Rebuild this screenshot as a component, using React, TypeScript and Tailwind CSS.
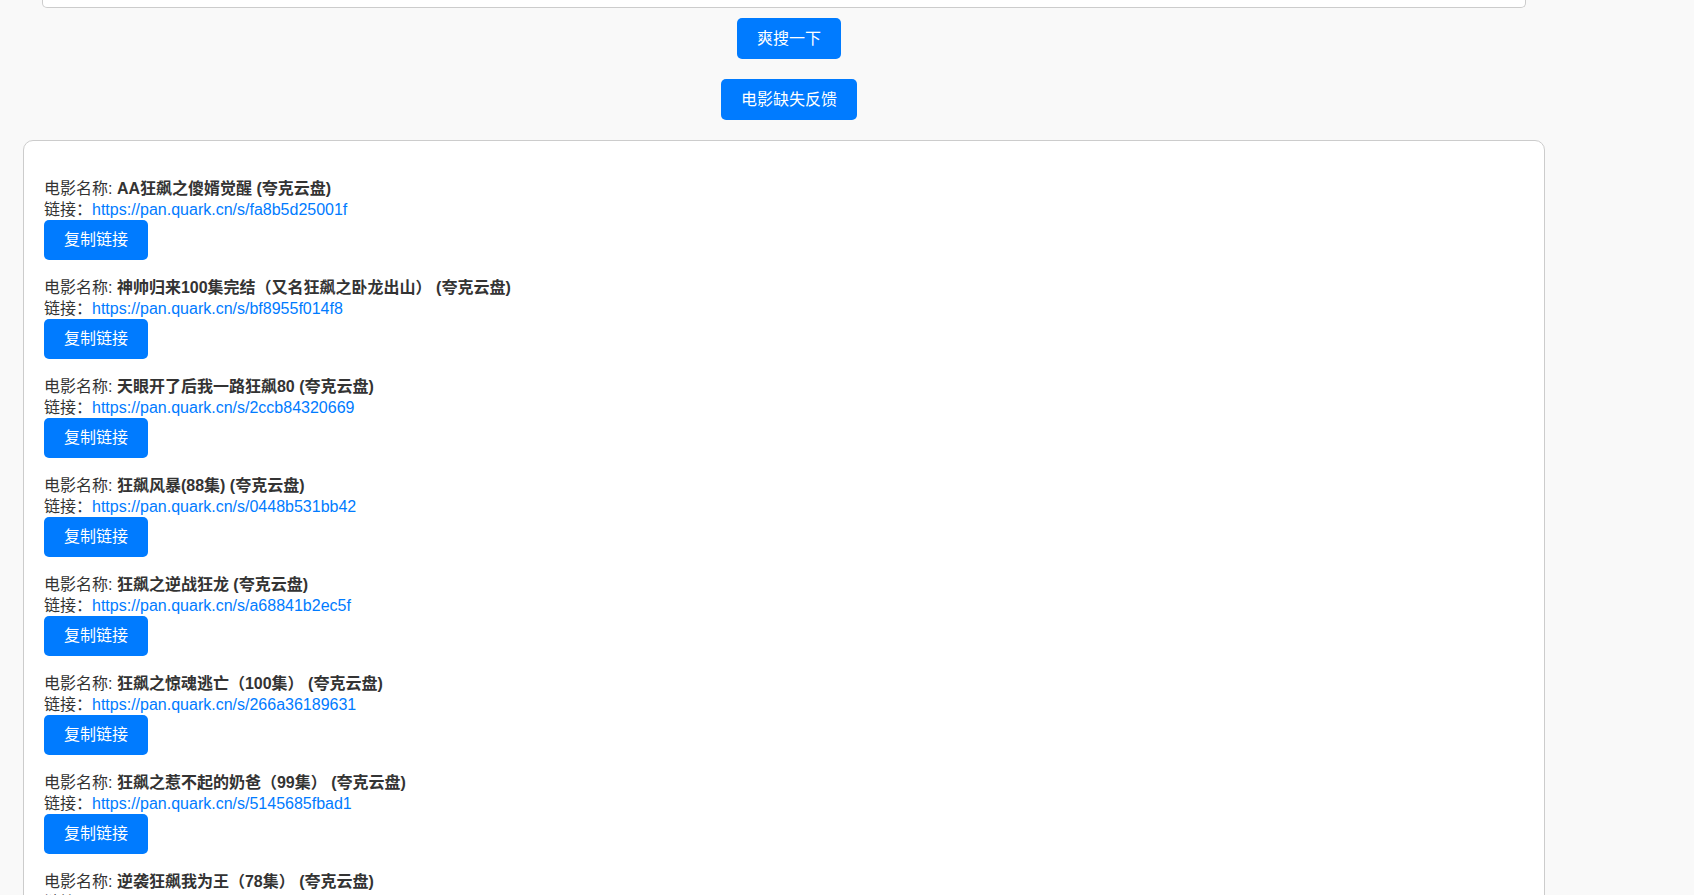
import React from "react";

const items = [
  { name: "AA狂飙之傻婿觉醒 (夸克云盘)", url: "https://pan.quark.cn/s/fa8b5d25001f" },
  { name: "神帅归来100集完结（又名狂飙之卧龙出山） (夸克云盘)", url: "https://pan.quark.cn/s/bf8955f014f8" },
  { name: "天眼开了后我一路狂飙80 (夸克云盘)", url: "https://pan.quark.cn/s/2ccb84320669" },
  { name: "狂飙风暴(88集) (夸克云盘)", url: "https://pan.quark.cn/s/0448b531bb42" },
  { name: "狂飙之逆战狂龙 (夸克云盘)", url: "https://pan.quark.cn/s/a68841b2ec5f" },
  { name: "狂飙之惊魂逃亡（100集） (夸克云盘)", url: "https://pan.quark.cn/s/266a36189631" },
  { name: "狂飙之惹不起的奶爸（99集） (夸克云盘)", url: "https://pan.quark.cn/s/5145685fbad1" },
  { name: "逆袭狂飙我为王（78集） (夸克云盘)", url: "https://pan.quark.cn/s/7c1e2b9a4d30" },
];

export default function App() {
  return (
    <div
      className="h-screen overflow-hidden bg-[#f9f9f9] text-[#333] text-[16px]"
      style={{ fontFamily: '"Liberation Sans", Arial, "Noto Sans CJK SC", sans-serif' }}
    >
      <div className="ml-[23px] w-[1522px]">
        {/* search input (scrolled, only its bottom visible) */}
        <div className="mx-[19px] h-[8px] bg-white border-x border-b border-[#cccccc] rounded-b-[5px]" />

        <div className="flex justify-center pl-[10px] mt-[10px]">
          <button className="h-[41px] px-5 bg-[#007bff] text-white rounded-[5px] leading-[24px]">
            爽搜一下
          </button>
        </div>
        <div className="flex justify-center pl-[10px] mt-[20px]">
          <button className="h-[41px] px-5 bg-[#007bff] text-white rounded-[5px] leading-[24px]">
            电影缺失反馈
          </button>
        </div>

        <div className="mt-[20px] bg-white border border-[#cccccc] rounded-[10px] pt-[37px] pl-[20px]">
          {items.map((it) => (
            <div key={it.url} className="mb-[17px]">
              <div className="leading-[22px]">
                电影名称: <span className="font-bold">{it.name}</span>
              </div>
              <div className="leading-[20px]">
                链接：<a href="#" className="text-[#007bff]">{it.url}</a>
              </div>
              <button className="h-[40px] w-[104px] bg-[#007bff] text-white rounded-[5px] leading-[24px]">
                复制链接
              </button>
            </div>
          ))}
        </div>
      </div>
    </div>
  );
}
